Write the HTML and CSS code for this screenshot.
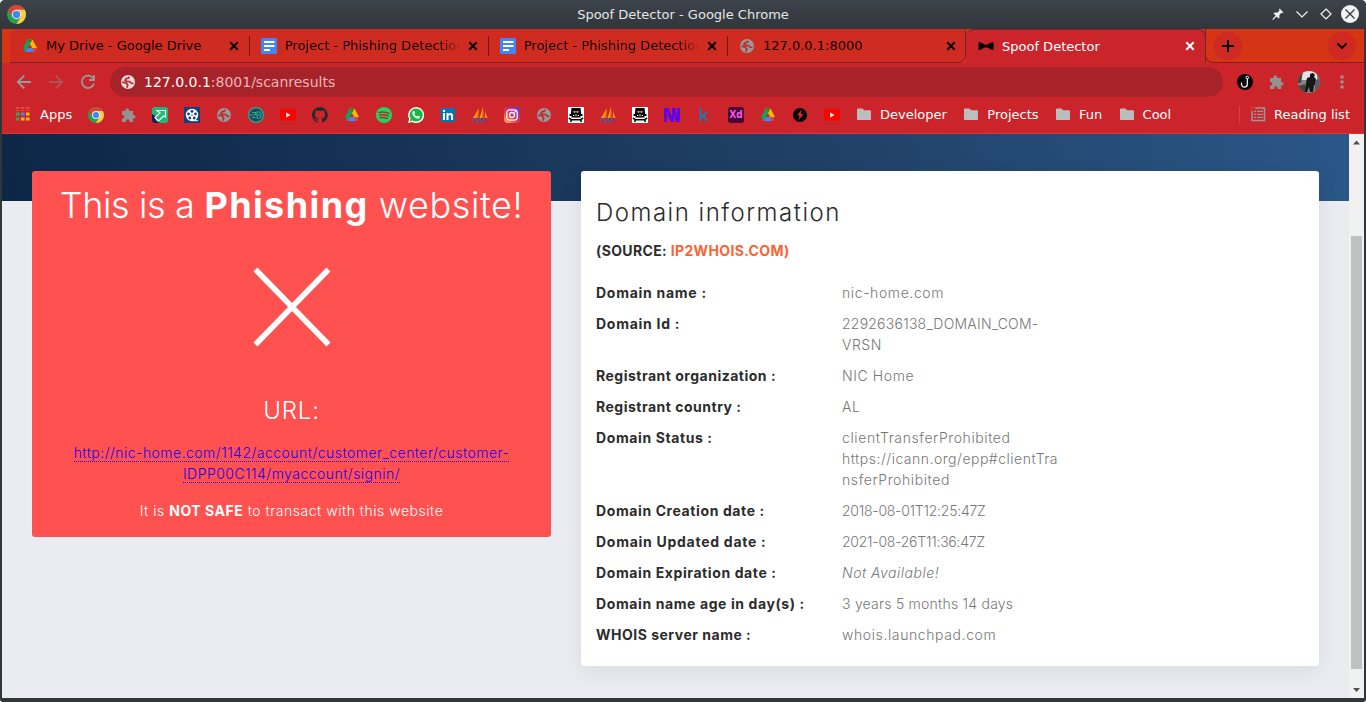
FILE: index.html
```html
<!DOCTYPE html>
<html lang="en">
<head>
<meta charset="utf-8">
<title>Spoof Detector</title>
<link rel="stylesheet" href="styles.css">
</head>
<body>
<svg class="defs" aria-hidden="true">
  <symbol id="chrome" viewBox="0 0 16 16"><circle cx="8" cy="8" r="8" fill="#2a9f4b"/><path d="M8 8L1.1 4A8 8 0 0 1 14.9 4z" fill="#db4437"/><path d="M8 4h6.9A8 8 0 0 1 8 16l3.5-6z" fill="#ffcd40"/><path d="M1.1 4L4.6 10 8 4z" fill="#db4437"/><circle cx="8" cy="8" r="4" fill="#f1f1f1"/><circle cx="8" cy="8" r="3.1" fill="#4285f4"/></symbol>
  <symbol id="drive" viewBox="0 0 16 16"><path d="M5.6 1.500L8 5.700 3.400 14 1 10z" fill="#11a35c"/><path d="M5.600 1.500h4.800L15 10h-4.800z" fill="#ffba00"/><path d="M5.800 10H10.200l2.400 4H3.400z" fill="#4285f4"/><path d="M5.600 1.500h4.800L8 5.700z" fill="#188038"/><path d="M10.200 10H15l-2.400 4z" fill="#ea4335"/></symbol>
  <symbol id="docs" viewBox="0 0 16 16"><rect width="16" height="16" rx="1.500" fill="#4285f4"/><path d="M3 4h10.500M3 8h10.500M3 12h6" stroke="#fff" stroke-width="1.800"/></symbol>
  <symbol id="globe" viewBox="0 0 16 16"><circle cx="8" cy="8" r="7" fill="currentColor"/><path d="M9.300 2.700L8 4.500H6.200L5 6.200l2 1.300h2.500l1.500 1.500 2.500.500M2.200 8.200l4 .800 1.500 2-.700 2.800" fill="none" stroke="#bd262b" stroke-width="1.700"/></symbol>
  <symbol id="puzzle" viewBox="0 0 16 16"><path d="M2 4h3.500V3a1.800 1.800 0 0 1 3.600 0v1h4v4h.600a1.800 1.800 0 0 1 0 3.600h-.600V15H9.500v-1a1.700 1.700 0 0 0-3.400 0v1H2v-3.500h.600a1.700 1.700 0 0 0 0-3.500H2z" fill="#929292"/></symbol>
  <symbol id="youtube" viewBox="0 0 16 16"><rect y="2.500" width="16" height="11" rx="2" fill="#f00"/><path d="M6.200 5.500L10.500 8l-4.300 2.500z" fill="#fff"/></symbol>
  <symbol id="pma" viewBox="0 0 16 16"><path d="M6.500 1.500L1 11h5.500zM11 0L7.500 11H11.500zM13 4l2.500 7H13z" fill="#f89c0e"/><path d="M6.500 4L4.500 11h2.500zM11 3.500L10 11h2z" fill="#e5561a"/><text x="0" y="15.800" class="pma-label">PMA</text></symbol>
  <symbol id="skull" viewBox="0 0 16 16"><path d="M0 0h16v16H0z" fill="#fff"/><path d="M3.500 1h9l.700 6h1.300v2H12.500v1.500h-9V9h-2V7h1.300z" fill="#080808"/><path d="M5.500 4.300h2v1.200h-2zM8.500 4.300h2v1.200h-2zM5 8h1.200v1H5zM7.400 7.500h1.200V9H7.400zM9.800 8H11v1H9.800z" fill="#fff"/><path d="M1 11l2.500 1.800h9L15 11M3 12.500v2.500M13 12.500v2.500" stroke="#080808" stroke-width="1.600" fill="none"/></symbol>
  <symbol id="folder" viewBox="0 0 16 16"><path d="M1 3.500a1 1 0 0 1 1-1h4.500L8 4.300h6a1 1 0 0 1 1 1V13a1 1 0 0 1-1 1H2a1 1 0 0 1-1-1z" fill="#bdbdbd"/></symbol>
  <symbol id="close" viewBox="0 0 16 16"><path d="M4.300 4.300l7.400 7.400M11.700 4.300l-7.400 7.400" stroke="currentColor" stroke-width="2"/></symbol>
</svg>
<div class="window">
  <header class="titlebar">
    <svg class="app-icon"><use href="#chrome"/></svg>
    <span class="title">Spoof Detector - Google Chrome</span>
    <div class="controls">
      <svg viewBox="0 0 18 18"><path d="M10.500 3.500l4 4-1 .500-1-.300-2.200 2.300.200 2.500-1 1-2-2L4 15l-.700-.700 3.400-3.700-2.200-2 1-1 2.700.200L10.500 5.500l-.500-1z" fill="#f1f2f3"/></svg>
      <svg viewBox="0 0 18 18"><path d="M3.500 6.500L9 12l5.500-5.500" fill="none" stroke="#f1f2f3" stroke-width="1.200"/></svg>
      <svg viewBox="0 0 18 18"><path d="M9 4l5 5-5 5-5-5z" fill="none" stroke="#f1f2f3" stroke-width="1.200"/></svg>
      <svg viewBox="0 0 18 18"><circle cx="9" cy="9" r="9" fill="#f1f2f3"/><path d="M4.500 4.500l9 9M13.500 4.500l-9 9" stroke="#343a40" stroke-width="1.300"/></svg>
    </div>
  </header>
  <nav class="tabs">
    <div class="tab first"><svg><use href="#drive"/></svg><span>My Drive - Google Drive</span><svg class="x"><use href="#close"/></svg></div>
    <div class="tab"><svg><use href="#docs"/></svg><span class="fade">Project - Phishing Detection</span><svg class="x"><use href="#close"/></svg></div>
    <div class="tab"><svg><use href="#docs"/></svg><span class="fade">Project - Phishing Detection</span><svg class="x"><use href="#close"/></svg></div>
    <div class="tab last"><svg class="gray"><use href="#globe"/></svg><span>127.0.0.1:8000</span><svg class="x"><use href="#close"/></svg></div>
    <div class="tab active"><svg viewBox="0 0 16 16"><path d="M.500 4.500q1-.800 3 .200L6.500 6.500h3l3-1.800q2-1 3-.200.500 3.500 0 7-1 .800-3-.200L9.500 9.500h-3l-3 1.800q-2 1-3 .200z" fill="#050505"/></svg><span>Spoof Detector</span><svg class="x"><use href="#close"/></svg></div>
    <div class="strip-end">
      <svg viewBox="0 0 28 28"><circle cx="14" cy="14" r="14" fill="#cf2a21"/><path d="M14 8v12M8 14h12" stroke="#000" stroke-width="2"/></svg>
      <svg viewBox="0 0 28 28"><circle cx="14" cy="14" r="14" fill="#cf2a21"/><path d="M9.500 11.500L14 16l4.500-4.500" fill="none" stroke="#000" stroke-width="2"/></svg>
    </div>
  </nav>
  <div class="toolbar">
    <div class="nav-buttons">
      <svg viewBox="0 0 16 16"><path d="M15 8H2M8.300 1.500L1.800 8l6.500 6.500" fill="none" stroke="#999" stroke-width="1.800"/></svg>
      <svg viewBox="0 0 16 16"><path d="M1 8h13M7.700 1.500L14.200 8l-6.500 6.500" fill="none" stroke="#b35156" stroke-width="1.800"/></svg>
      <svg viewBox="0 0 16 16"><path d="M13.300 4.500A6.200 6.200 0 1 0 14 9.500M14 1v5H9" fill="none" stroke="#999" stroke-width="1.800"/></svg>
    </div>
    <div class="address"><svg><use href="#globe"/></svg><span><b>127.0.0.1</b>:8001/scanresults</span></div>
    <div class="extensions">
      <svg viewBox="0 0 16 16"><circle cx="8" cy="8" r="8" fill="#050505"/><path d="M10.300 4.800v5a2.800 2.800 0 0 1-5.800.700V8.500" fill="none" stroke="#fff" stroke-width="1.200"/><circle cx="10.300" cy="3.500" r="1.300" fill="none" stroke="#fff"/></svg>
      <svg class="ext"><use href="#puzzle"/></svg>
      <svg class="avatar" viewBox="0 0 22 22"><clipPath id="round"><circle cx="11" cy="11" r="11"/></clipPath><g clip-path="url(#round)"><path d="M0 0h22v22H0z" fill="#858585"/><path d="M5 0h14v9H3z" fill="#e4e1e2"/><path d="M0 0h5L3 12H0zM0 15l7-2 2 9H0z" fill="#454545"/><path d="M12 3l3-1 2 2-1 2 2 2 1 7-3-1-1 7h-3l-1-5-2 5H7l1-9 1-5 3-1z" fill="#171717"/><path d="M17 10l5-3v12l-5 2z" fill="#5d5d5d"/></g></svg>
      <svg viewBox="0 0 16 16"><path d="M6.500 1.500h3v3h-3zM6.500 6.500h3v3h-3zM6.500 11.500h3v3h-3z" fill="#999"/></svg>
    </div>
  </div>
  <div class="bookmarks">
    <div class="apps"><svg viewBox="0 0 16 16"><path d="M1 1h3.500v4H1zM6 1h3.500v4H6zM11 1h3.500v4H11z" fill="#f04438"/><path d="M1 6.500h3.500v3H1zM1 11.500h3.500v3H1z" fill="#34a853"/><path d="M6 6.500h3.500v3H6z" fill="#4285f4"/><path d="M11 6.500h3.500v3H11zM11 11.500h3.500v3H11zM6 11.500h3.500v3H6z" fill="#fbbc05"/><path d="M1 3.500h14" stroke="#cb252b"/></svg>Apps</div>
    <div class="icons">
      <svg><use href="#chrome"/></svg>
      <svg><use href="#puzzle"/></svg>
      <svg viewBox="0 0 16 16"><rect width="16" height="16" rx="3" fill="#20b877"/><path d="M0 7l5 3-2 3 5 3H3q-3 0-3-3z" fill="#171b52"/><path d="M5 3.500h8.500V10l-2-1-5 5-3.500-3.500 5-4.500z" fill="#26b875" stroke="#fff" stroke-width="1.200"/></svg>
      <svg viewBox="0 0 16 16"><path d="M0 0h16v16H0z" fill="#153e7c"/><circle cx="8" cy="8" r="6.200" fill="#fff"/><g fill="#153e7c"><circle cx="8" cy="8" r=".8"/><circle cx="8" cy="4.400" r="1.400"/><circle cx="11.500" cy="7" r="1.400"/><circle cx="10.200" cy="11" r="1.400"/><circle cx="5.800" cy="11" r="1.400"/><circle cx="4.500" cy="7" r="1.400"/></g><path d="M9 13.700h5" stroke="#fff"/></svg>
      <svg class="gray"><use href="#globe"/></svg>
      <svg viewBox="0 0 16 16"><circle cx="8" cy="8" r="7.400" fill="#28445e" stroke="#18b696" stroke-width="1.200"/><path d="M2 8h5M4 5.500h3.500V8M4 10.500h3.500M9 5h3q2 3 0 6H9zM9 8h3" fill="none" stroke="#18b696" stroke-width="1.100"/></svg>
      <svg><use href="#youtube"/></svg>
      <svg viewBox="0 0 16 16"><path d="M8 0A8 8 0 0 0 5.500 15.600c.400 0 .500-.200.500-.400v-1.500c-2.200.500-2.700-1-2.700-1-.400-.900-.900-1.200-.900-1.200-.700-.500.100-.500.100-.500.800.100 1.200.800 1.200.800.700 1.200 1.900.900 2.300.700.100-.500.300-.900.500-1.100-1.800-.200-3.600-.900-3.600-4 0-.900.300-1.600.800-2.100-.100-.200-.400-1 .100-2.100 0 0 .700-.200 2.200.800a7.500 7.500 0 0 1 4 0c1.500-1 2.200-.800 2.200-.800.400 1.100.2 1.900.1 2.100.500.600.8 1.300.8 2.100 0 3.100-1.900 3.800-3.700 4 .3.300.6.800.6 1.500v2.200c0 .2.100.5.500.4A8 8 0 0 0 8 0z" fill="#24292e"/></svg>
      <svg><use href="#drive"/></svg>
      <svg viewBox="0 0 16 16"><circle cx="8" cy="8" r="8" fill="#1ed760"/><path d="M3 5.500q5-1.500 10 1M3.500 8.200q4.500-1.300 8.700.9M4 10.800q4-1 7.200.8" fill="none" stroke="#b7292b" stroke-width="1.400" stroke-linecap="round"/></svg>
      <svg viewBox="0 0 16 16"><path d="M0 16l1.200-4A8 8 0 1 1 4.200 15z" fill="#fff"/><path d="M1.800 14.200l.8-2.600A6.600 6.600 0 1 1 4.500 13.500z" fill="#16b943"/><path d="M5 4l1-.2 1 2-.7 1.100q1 2 2.800 2.700l1-.9 2 1q-.3 2-2.200 2Q5 10.500 4.300 6.200 4.300 4.700 5 4z" fill="#fff"/></svg>
      <svg viewBox="0 0 16 16"><path d="M1 1h14v14H1z" fill="#0177b5"/><path d="M3 6h2v7H3zM6.500 6h2v1q2.300-2 4.500.5V13h-2V9q-.8-2-2.500 0v4h-2z" fill="#fff"/><circle cx="4" cy="3.900" r="1.200" fill="#fff"/></svg>
      <svg><use href="#pma"/></svg>
      <svg viewBox="0 0 16 16"><linearGradient id="insta" x1="0" y1="1" x2=".8" y2="0"><stop stop-color="#ffc44d"/><stop offset=".45" stop-color="#ed324e"/><stop offset="1" stop-color="#6b3bd1"/></linearGradient><rect width="16" height="16" rx="4" fill="url(#insta)"/><rect x="2.800" y="2.800" width="10.400" height="10.400" rx="3" fill="none" stroke="#fff" stroke-width="1.200"/><circle cx="8" cy="8" r="2.500" fill="none" stroke="#fff" stroke-width="1.300"/><circle cx="11.200" cy="4.800" r=".8" fill="#fff"/></svg>
      <svg class="gray"><use href="#globe"/></svg>
      <svg><use href="#skull"/></svg>
      <svg><use href="#pma"/></svg>
      <svg><use href="#skull"/></svg>
      <svg viewBox="0 0 16 16"><path d="M0 15V1h4.500L8 10V1h3.500L13 10.500V1H16v14h-4.300L10 7.500V15H6.500L3 5.500V15z" fill="#6200ea"/></svg>
      <svg viewBox="0 0 16 16"><path d="M4.500 1v13.500M11 5l-6 5.500M7 8.500l4.500 6" fill="none" stroke="#127fb0" stroke-width="1.900"/></svg>
      <span class="xd">Xd</span>
      <svg><use href="#drive"/></svg>
      <svg viewBox="0 0 16 16"><circle cx="8" cy="8" r="7" fill="#050505"/><path d="M9.500 2.500L5 8.500h2.500l-1 5 5-6.500H8.800z" fill="#d82a30"/></svg>
      <svg><use href="#youtube"/></svg>
    </div>
    <div class="folder"><svg><use href="#folder"/></svg>Developer</div>
    <div class="folder"><svg><use href="#folder"/></svg>Projects</div>
    <div class="folder"><svg><use href="#folder"/></svg>Fun</div>
    <div class="folder"><svg><use href="#folder"/></svg>Cool</div>
    <div class="reading"><svg viewBox="0 0 16 16"><path d="M2 2h12.500v12.500H2z" fill="none" stroke="#999" stroke-width="1.500"/><path d="M4 5.300h2M7 5.300h6M4 8.300h2M7 8.300h6M4 11.300h2M7 11.300h6" stroke="#999" stroke-width="1.300"/><circle cx="2.500" cy="2.300" r="2.800" fill="#d62e25"/></svg>Reading list</div>
  </div>
  <div class="viewport">
    <main class="page">
      <section class="card verdict">
        <h1><span class="lead">This is a</span> <b>Phishing</b> <span class="tail">website!</span></h1>
        <svg class="cross" viewBox="0 0 78 80"><path d="M2.500 2.500l73 75M75.500 2.500l-73 75" stroke="#fff" stroke-width="5.600"/></svg>
        <h2>URL:</h2>
        <p class="url"><a>http://nic-home.com/1142/account/customer_center/customer-</a><br><a>IDPP00C114/myaccount/signin/</a></p>
        <p class="note">It is <b>NOT SAFE</b> to transact with this website</p>
      </section>
      <section class="card info">
        <h2>Domain information</h2>
        <h3>(SOURCE: <a>IP2WHOIS.COM)</a></h3>
        <dl>
          <dt class="loose">Domain name :</dt><dd>nic-home.com</dd>
          <dt class="loose">Domain Id :</dt><dd><span class="snug">2292636138_DOMAIN_COM-</span><br><span class="semi">VRSN</span></dd>
          <dt class="semi">Registrant organization :</dt><dd>NIC Home</dd>
          <dt class="semi">Registrant country :</dt><dd>AL</dd>
          <dt>Domain Status :</dt><dd>clientTransferProhibited<br><span class="semi">https://icann.org/epp#clientTra</span><br>nsferProhibited</dd>
          <dt>Domain Creation date :</dt><dd class="dense">2018-08-01T12:25:47Z</dd>
          <dt class="loose">Domain Updated date :</dt><dd class="dense">2021-08-26T11:36:47Z</dd>
          <dt>Domain Expiration date :</dt><dd><i class="semi">Not Available!</i></dd>
          <dt>Domain name age in day(s) :</dt><dd class="snug">3 years 5 months 14 days</dd>
          <dt class="semi">WHOIS server name :</dt><dd>whois.launchpad.com</dd>
        </dl>
      </section>
    </main>
    <div class="scrollbar"><svg viewBox="0 0 15 17"><path d="M4 10.500h7L7.500 6.500z" fill="#505050"/></svg><div class="thumb"></div><svg viewBox="0 0 15 17"><path d="M4 7h7l-3.500 4z" fill="#505050"/></svg></div>
  </div>
</div>
</body>
</html>
```

FILE: styles.css
```css
* { box-sizing: border-box; }
body { margin: 0; background: #fff; font: 13px "DejaVu Sans", sans-serif; }
svg { display: block; width: 16px; height: 16px; flex: none; }
.defs { display: none; }
.window { display: flex; flex-direction: column; width: 1366px; height: 702px; padding: 0 2px 4px; background: #30363a; border-radius: 5px 5px 3px 3px; overflow: hidden; }

.titlebar { display: flex; align-items: center; height: 29px; margin: 0 -2px; padding: 0 7px 1px; background: linear-gradient(#3d434b, #30363a); color: #e4e6e8; }
.app-icon { width: 19px; height: 19px; }
.title { flex: 1; text-align: center; padding-left: 71px; }
.controls { display: flex; gap: 6px; }
.controls svg { width: 18px; height: 18px; }

.tabs { display: flex; height: 34px; background: linear-gradient(#d53514 50%, #cb252b 50%); padding-left: 8px; flex: none; }
.tabs { background: #d53514; margin: 0; }
.tab { display: flex; align-items: center; width: 239px; background: #cf2b21; border-bottom: 1px solid #7d2028; padding: 0 7px 0 12px; position: relative; color: #120303; }
.tab.first { border-radius: 8px 0 0 0; box-shadow: -8px 33px 0 -33px #7d2028; }
.tab.last { border-radius: 0 0 8px 0; border-right: 1px solid #7d2028; padding-right: 6px; }
.tab span { flex: 1; margin-left: 8px; white-space: nowrap; overflow: hidden; }
.tab .fade { -webkit-mask-image: linear-gradient(90deg, #000 88%, transparent); mask-image: linear-gradient(90deg, #000 88%, transparent); }
.tab .x { margin-left: 4px; color: #050505; }
.tab:nth-child(-n+3)::after { content: ""; position: absolute; right: -1px; top: 7px; width: 1px; height: 20px; background: #70170f; z-index: 1; }
.tab.active { background: #cb252b; color: #fff; border-top: 1px solid #7d2028; border-right: 1px solid #7d2028; border-bottom: 0; border-radius: 8px 8px 0 0; padding: 0 7px 1px 12px; width: 240px; }
.tab.active .x { color: #fff; }
.strip-end { flex: 1; display: flex; justify-content: space-between; align-items: center; padding: 0 8px; border-bottom: 1px solid #7d2028; border-left: 1px solid #7d2028; border-radius: 0 0 0 8px; margin-left: -1px; }
.strip-end svg { width: 28px; height: 28px; }

.toolbar, .bookmarks { background: #cb252b; display: flex; align-items: center; flex: none; }
.toolbar { height: 38px; padding: 0 14px; }
.nav-buttons { display: flex; gap: 16px; }
.address { display: flex; align-items: center; gap: 8px; width: 1114px; height: 30px; margin-left: 14px; padding-left: 10px; border-radius: 15px; background: #a82329; color: #e7b7ba; font-size: 14px; }
.address svg { color: #dcdcdc; }
.address b { font-weight: 400; color: #fff; }
.extensions { display: flex; align-items: center; gap: 14px; margin-left: 14px; }
.extensions .ext { margin: 0 -1px 0 1px; }
.extensions .avatar { width: 22px; height: 22px; margin-left: 1px; }
.gray { color: #999; }

.bookmarks { height: 33px; padding: 0 14px 5px 13px; color: #fff; border-bottom: 1px solid #d6383c; }
.apps, .folder, .reading { display: flex; align-items: center; gap: 8px; line-height: 15px; padding-bottom: 1px; }
.apps { width: 73px; gap: 9px; }
.icons { display: flex; gap: 16px; margin-right: 16px; }
.pma-label { font: italic bold 6.500px "Liberation Sans", sans-serif; fill: #4d5b93; }
.xd { width: 16px; height: 16px; border-radius: 3px; background: #470137; color: #ff61f6; font: bold 10px/15px "Open Sans", sans-serif; text-align: center; }
.folder { margin-right: 16.4px; }
.reading { margin-left: auto; padding-left: 10px; border-left: 1px solid #d54442; }

.viewport { display: flex; flex: 1; background: #ebecf1; min-height: 0; }
.page { display: flex; align-items: flex-start; gap: 30px; width: 1347px; padding: 37px 30px 0; background: linear-gradient(75deg, #0c2646, #204065 60%, #2a5788) 0 0 / 100% 67px no-repeat; font: 300 14px/21px Inter, sans-serif; }
.card { border-radius: 3px; }
.card h1, .card h2, .card h3, .card p, dl, dd { margin: 0; font-weight: 300; }
.verdict { width: 519px; height: 366px; background: #ff5150; color: #fff; text-align: center; }
.verdict h1 { font-size: 36px; line-height: 44px; padding-top: 12px; white-space: nowrap; }
.verdict h1 .lead { letter-spacing: -.4px; }
.verdict h1 b { letter-spacing: 1.4px; }
.verdict h1 .tail { letter-spacing: .6px; }
.verdict b { font-weight: 700; }
.cross { width: 78px; height: 80px; margin: 40px auto 0; }
.verdict h2 { font-size: 24px; line-height: 30px; margin-top: 49px; letter-spacing: .8px; }
.url { padding-top: 16px; color: #1c00ee; letter-spacing: .47px; }
.url a { border-bottom: 1px dotted #1c00ee; }
.card .note { margin-top: 16px; letter-spacing: .52px; }
.info { width: 738px; height: 495px; padding: 27px 15px 0; background: #fff; box-shadow: 0 5px 20px rgba(0, 0, 0, .08); color: #2c2c2c; }
.info h2 { font-size: 24px; line-height: 30px; letter-spacing: 1.5px; }
.info h3 { font-size: 14px; font-weight: 700; line-height: 21px; margin-top: 12px; letter-spacing: .35px; }
.info h3 a { color: #fa6332; }
dl { display: grid; grid-template-columns: 246px 220px; row-gap: 10px; padding-top: 21px; letter-spacing: .6px; }
dt { font-weight: 700; }
dd { color: #777; white-space: nowrap; }
.loose { letter-spacing: .73px; }
.semi { letter-spacing: .5px; }
.snug { letter-spacing: .23px; }
.dense { letter-spacing: -.25px; }

.scrollbar { width: 15px; background: #f1f1f1; display: flex; flex-direction: column; }
.scrollbar svg { width: 15px; height: 17px; }
.thumb { width: 11px; height: 433px; margin: 85px auto 12px 2px; background: #c1c1c1; }
```
